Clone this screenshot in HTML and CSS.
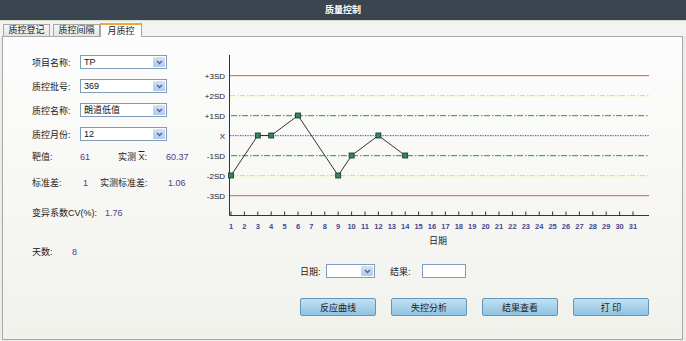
FILE: index.html
```html
<!DOCTYPE html>
<html lang="zh">
<head>
    <meta charset="UTF-8">
    <title>质量控制</title>
    <link rel="stylesheet" href="styles.css">
</head>
<body>
    <div class="titlebar">质量控制</div>
    <div class="tabs">
        <span class="tab">质控登记</span>
        <span class="tab">质控间隔</span>
        <span class="tab active">月质控</span>
    </div>
    <div class="panel">
        <div class="main">
            <div class="form">
                <div class="field">
                    <label>项目名称:</label>
                    <div class="select"><span class="value">TP</span><span class="arrow"><svg width="7" height="5" viewBox="0 0 7 5"><path d="M1 1l2.5 2.5L6 1" fill="none" stroke="#4d6590" stroke-width="1.4"/></svg></span></div>
                </div>
                <div class="field">
                    <label>质控批号:</label>
                    <div class="select"><span class="value">369</span><span class="arrow"><svg width="7" height="5" viewBox="0 0 7 5"><path d="M1 1l2.5 2.5L6 1" fill="none" stroke="#4d6590" stroke-width="1.4"/></svg></span></div>
                </div>
                <div class="field">
                    <label>质控名称:</label>
                    <div class="select"><span class="value">朗道低值</span><span class="arrow"><svg width="7" height="5" viewBox="0 0 7 5"><path d="M1 1l2.5 2.5L6 1" fill="none" stroke="#4d6590" stroke-width="1.4"/></svg></span></div>
                </div>
                <div class="field">
                    <label>质控月份:</label>
                    <div class="select"><span class="value">12</span><span class="arrow"><svg width="7" height="5" viewBox="0 0 7 5"><path d="M1 1l2.5 2.5L6 1" fill="none" stroke="#4d6590" stroke-width="1.4"/></svg></span></div>
                </div>

                <div class="stat stat-target">
                    <span class="w48">靶值:</span><span class="num w38">61</span><span class="w48">实测 <span class="xbar">X</span>:</span><span class="num">60.37</span>
                </div>
                <div class="stat stat-sd">
                    <span class="w51">标准差:</span><span class="num w17">1</span><span class="w68">实测标准差:</span><span class="num">1.06</span>
                </div>
                <div class="stat stat-cv">
                    <span class="w73">变异系数CV(%):</span><span class="num">1.76</span>
                </div>
                <div class="stat stat-days">
                    <span class="w40">天数:</span><span class="num">8</span>
                </div>
            </div>

            <svg class="chart" width="460" height="222" viewBox="200 37 460 222">
                <defs>
                    <pattern id="dash-yellow" width="10" height="300" patternUnits="userSpaceOnUse">
                        <rect x="0" y="0" width="5" height="300" fill="#ece24a"/>
                        <rect x="7" y="0" width="1.5" height="300" fill="#ece24a"/>
                    </pattern>
                    <pattern id="dash-green" width="11" height="300" patternUnits="userSpaceOnUse">
                        <rect x="0" y="0" width="6" height="300" fill="#3ca67a"/>
                        <rect x="8" y="0" width="1.5" height="300" fill="#3ca67a"/>
                    </pattern>
                    <pattern id="dot-blue" width="2.5" height="300" patternUnits="userSpaceOnUse">
                        <rect x="0" y="0" width="1.3" height="300" fill="#6556d8"/>
                    </pattern>
                </defs>

                <!-- control limits -->
                <rect class="lim-red" x="229" y="75" width="420" height="1.2"/>
                <rect fill="url(#dash-yellow)" x="229" y="95" width="420" height="1.2"/>
                <rect fill="url(#dash-green)" x="229" y="115" width="420" height="1.2"/>
                <rect fill="url(#dot-blue)" x="229" y="135" width="420" height="1.2"/>
                <rect fill="url(#dash-green)" x="229" y="155" width="420" height="1.2"/>
                <rect fill="url(#dash-yellow)" x="229" y="175" width="420" height="1.2"/>
                <rect class="lim-red" x="229" y="195" width="420" height="1.2"/>

                <g class="ylabels">
                    <text x="225" y="78.5">+3SD</text>
                    <text x="225" y="99">+2SD</text>
                    <text x="225" y="118.5">+1SD</text>
                    <text x="225" y="139">X</text>
                    <text x="225" y="158.5">-1SD</text>
                    <text x="225" y="178.5">-2SD</text>
                    <text x="225" y="198.5">-3SD</text>
                </g>

                <!-- axes -->
                <path class="axis" d="M229.5 55V215.5H649"/>
                <path class="axis" d="M231 211.5v4M244.4 211.5v4M257.8 211.5v4M271.2 211.5v4M284.6 211.5v4M298 211.5v4M311.4 211.5v4M324.8 211.5v4M338.2 211.5v4M351.6 211.5v4M365 211.5v4M378.4 211.5v4M391.8 211.5v4M405.2 211.5v4M418.6 211.5v4M432 211.5v4M445.4 211.5v4M458.8 211.5v4M472.2 211.5v4M485.6 211.5v4M499 211.5v4M512.4 211.5v4M525.8 211.5v4M539.2 211.5v4M552.6 211.5v4M566 211.5v4M579.4 211.5v4M592.8 211.5v4M606.2 211.5v4M619.6 211.5v4M633 211.5v4"/>

                <g class="xlabels">
                    <text x="231" y="229">1</text>
                    <text x="244.4" y="229">2</text>
                    <text x="257.8" y="229">3</text>
                    <text x="271.2" y="229">4</text>
                    <text x="284.6" y="229">5</text>
                    <text x="298" y="229">6</text>
                    <text x="311.4" y="229">7</text>
                    <text x="324.8" y="229">8</text>
                    <text x="338.2" y="229">9</text>
                    <text x="351.6" y="229">10</text>
                    <text x="365" y="229">11</text>
                    <text x="378.4" y="229">12</text>
                    <text x="391.8" y="229">13</text>
                    <text x="405.2" y="229">14</text>
                    <text x="418.6" y="229">15</text>
                    <text x="432" y="229">16</text>
                    <text x="445.4" y="229">17</text>
                    <text x="458.8" y="229">18</text>
                    <text x="472.2" y="229">19</text>
                    <text x="485.6" y="229">20</text>
                    <text x="499" y="229">21</text>
                    <text x="512.4" y="229">22</text>
                    <text x="525.8" y="229">23</text>
                    <text x="539.2" y="229">24</text>
                    <text x="552.6" y="229">25</text>
                    <text x="566" y="229">26</text>
                    <text x="579.4" y="229">27</text>
                    <text x="592.8" y="229">28</text>
                    <text x="606.2" y="229">29</text>
                    <text x="619.6" y="229">30</text>
                    <text x="633" y="229">31</text>
                </g>
                <text class="xtitle" x="438" y="244">日期</text>

                <!-- data -->
                <polyline points="231,175.5 257.8,135.5 271.2,135.5 298,115.5 338.2,175.5 351.6,155.5 378.4,135.5 405.2,155.5" fill="none" stroke="#333333" stroke-width="1"/>
                <g fill="#2e8a56" stroke="#16302a" stroke-width="0.8">
                    <rect x="228.5" y="173" width="5" height="5"/>
                    <rect x="255.3" y="133" width="5" height="5"/>
                    <rect x="268.7" y="133" width="5" height="5"/>
                    <rect x="295.5" y="113" width="5" height="5"/>
                    <rect x="335.7" y="173" width="5" height="5"/>
                    <rect x="349.1" y="153" width="5" height="5"/>
                    <rect x="375.9" y="133" width="5" height="5"/>
                    <rect x="402.7" y="153" width="5" height="5"/>
                </g>
            </svg>
        </div>

        <div class="filters">
            <label>日期:</label>
            <div class="select small"><span class="value"></span><span class="arrow"><svg width="7" height="5" viewBox="0 0 7 5"><path d="M1 1l2.5 2.5L6 1" fill="none" stroke="#4d6590" stroke-width="1.4"/></svg></span></div>
            <label class="result-label">结果:</label>
            <div class="textbox"></div>
        </div>

        <div class="buttons">
            <button class="btn">反应曲线</button>
            <button class="btn">失控分析</button>
            <button class="btn">结果查看</button>
            <button class="btn">打 印</button>
        </div>
    </div>
</body>
</html>
```

FILE: styles.css
```css
body {
    margin: 0;
    padding: 0;
    width: 686px;
    height: 341px;
    overflow: hidden;
    font-family: "Liberation Sans", "Noto Sans CJK SC", sans-serif;
    font-size: 9px;
    color: #222222;
    background-color: #ecece8;
}
.titlebar {
    height: 20px;
    line-height: 21px;
    background-color: #3a4550;
    color: #ffffff;
    font-weight: bold;
    text-align: center;
    border-bottom: 1px solid #d3dccb;
}
.tabs {
    display: flex;
    align-items: flex-end;
    height: 15px;
    padding-left: 3px;
    background-color: #f3f3f1;
}
.tab {
    box-sizing: border-box;
    width: 47px;
    height: 12px;
    margin-right: 3px;
    line-height: 11px;
    text-align: center;
    background: linear-gradient(#f6f6f6, #e4e4e2);
    border: 1px solid #a6a6a6;
    border-bottom: none;
    color: #222222;
    position: relative;
}
.tab.active {
    width: 42px;
    height: 14px;
    margin-left: -3px;
    line-height: 12px;
    background: #ffffff;
    border-top: 2px solid #f0a53a;
    top: 1px;
    z-index: 1;
}
.panel {
    box-sizing: border-box;
    height: 304px;
    margin: 0 3px 0 2px;
    border: 1px solid #a8a8a8;
    background: linear-gradient(#fdfdfd, #f1f1ec);
}
.main {
    display: flex;
    height: 222px;
}
.form {
    box-sizing: border-box;
    width: 197px;
    padding: 18px 0 0 29px;
}
.field {
    display: flex;
    align-items: center;
    height: 14px;
    margin-bottom: 10px;
}
.field label {
    width: 48px;
}
.select {
    box-sizing: border-box;
    display: flex;
    width: 87px;
    height: 14px;
    border: 1px solid #7f9db9;
    background-color: #ffffff;
}
.select .value {
    flex: 1;
    padding-left: 3px;
    line-height: 12px;
    color: #111111;
}
.select .arrow {
    box-sizing: border-box;
    display: flex;
    align-items: center;
    justify-content: center;
    width: 12px;
    margin: 1px;
    background: linear-gradient(#d4e2f7, #b2c8ec);
    border-radius: 1px;
}
.stat {
    display: flex;
    height: 12px;
    line-height: 12px;
}
.stat-target {
    margin-top: 4px;
}
.stat-sd {
    margin-top: 14px;
}
.stat-cv {
    margin-top: 18px;
}
.stat-days {
    margin-top: 27px;
}
.num {
    color: #4a3f90;
}
.xbar {
    text-decoration: overline;
}
.w17 { width: 17px; }
.w38 { width: 38px; }
.w40 { width: 40px; }
.w48 { width: 48px; }
.w51 { width: 51px; }
.w68 { width: 68px; }
.w73 { width: 73px; }
.chart {
    display: block;
    font-family: "Liberation Sans", "Noto Sans CJK SC", sans-serif;
}
.lim-red {
    fill: #ec6f58;
}
.axis {
    fill: none;
    stroke: #333333;
    stroke-width: 1;
}
.ylabels text {
    font-size: 8px;
    text-anchor: end;
    fill: #222222;
}
.xlabels text {
    font-size: 7.5px;
    font-weight: bold;
    text-anchor: middle;
    fill: #45458e;
}
.xtitle {
    font-size: 9px;
    text-anchor: middle;
    fill: #222222;
}
.filters {
    display: flex;
    align-items: center;
    height: 14px;
    margin: 5px 0 0 297px;
}
.filters label {
    width: 26px;
}
.filters .result-label {
    width: 32px;
    margin-left: 15px;
}
.select.small {
    width: 49px;
}
.textbox {
    box-sizing: border-box;
    width: 44px;
    height: 14px;
    border: 1px solid #7f9db9;
    background-color: #ffffff;
}
.buttons {
    display: flex;
    gap: 15px;
    margin: 20px 0 0 297px;
}
.btn {
    box-sizing: border-box;
    width: 76px;
    height: 18px;
    padding: 0;
    font-family: "Liberation Sans", "Noto Sans CJK SC", sans-serif;
    font-size: 9px;
    color: #222222;
    background: linear-gradient(#c2e0f2, #8fc3e2);
    border: 1px solid #6496b8;
    border-radius: 2px;
    cursor: pointer;
}
```
